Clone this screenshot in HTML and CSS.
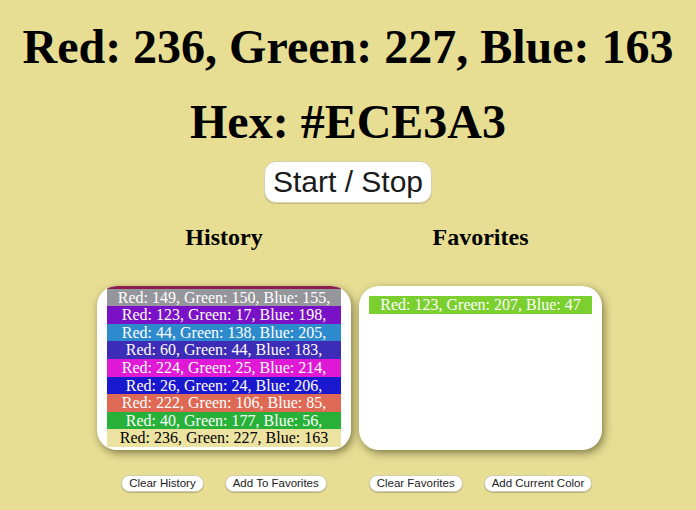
FILE: index.html
```html
<!DOCTYPE html>
<html lang="en">
<head>
<meta charset="utf-8">
<title>Color Cycler</title>
<link rel="stylesheet" href="styles.css">
</head>
<body>
<main class="app">
  <h1 class="title title-rgb">Red: 236, Green: 227, Blue: 163</h1>
  <h1 class="title title-hex">Hex: #ECE3A3</h1>
  <button class="toggle">Start / Stop</button>
  <div class="columns">
    <section class="col col-history">
      <h2 class="col-title">History</h2>
      <div class="box box-history">
        <div class="item" style="background: rgb(139,29,79)" aria-hidden="true"></div>
        <div class="item" style="background: rgb(149,150,155)">Red: 149, Green: 150, Blue: 155,</div>
        <div class="item" style="background: rgb(123,17,198)">Red: 123, Green: 17, Blue: 198,</div>
        <div class="item" style="background: rgb(44,138,205)">Red: 44, Green: 138, Blue: 205,</div>
        <div class="item" style="background: rgb(60,44,183)">Red: 60, Green: 44, Blue: 183,</div>
        <div class="item" style="background: rgb(224,25,214)">Red: 224, Green: 25, Blue: 214,</div>
        <div class="item" style="background: rgb(26,24,206)">Red: 26, Green: 24, Blue: 206,</div>
        <div class="item" style="background: rgb(222,106,85)">Red: 222, Green: 106, Blue: 85,</div>
        <div class="item" style="background: rgb(40,177,56)">Red: 40, Green: 177, Blue: 56,</div>
        <div class="item item-dark" style="background: rgb(236,227,163)">Red: 236, Green: 227, Blue: 163</div>
      </div>
      <div class="actions">
        <button class="small">Clear History</button>
        <button class="small">Add To Favorites</button>
      </div>
    </section>
    <section class="col col-favorites">
      <h2 class="col-title">Favorites</h2>
      <div class="box box-favorites">
        <div class="item" style="background: rgb(123,207,47)">Red: 123, Green: 207, Blue: 47</div>
      </div>
      <div class="actions">
        <button class="small">Clear Favorites</button>
        <button class="small">Add Current Color</button>
      </div>
    </section>
  </div>
</main>
</body>
</html>
```

FILE: styles.css
```css
html, body {
  margin: 0;
  padding: 0;
}

body {
  background: #e7de94;
  font-family: "Liberation Serif", "Times New Roman", serif;
  color: #000;
  width: 696px;
  height: 510px;
  overflow: hidden;
}

.app {
  display: flex;
  flex-direction: column;
  align-items: center;
}

.title {
  margin: 19px 0 0;
  font-size: 48px;
  line-height: 56px;
  font-weight: 700;
  text-align: center;
}

.toggle {
  margin-top: 11px;
  height: 42px;
  padding: 0 8px;
  border: 1px solid #d6d1b0;
  border-radius: 12px;
  background: #fff;
  font-family: "Liberation Sans", Arial, sans-serif;
  font-size: 30px;
  color: #1a1a1a;
  box-shadow: 0 1px 1px rgba(0, 0, 0, 0.15);
}

.columns {
  display: grid;
  grid-template-columns: 254px 243px;
  column-gap: 8px;
  padding-left: 3px;
}

.col {
  display: flex;
  flex-direction: column;
  align-items: center;
}

.col-title {
  margin: 20px 0 0;
  font-size: 24px;
  line-height: 28px;
  font-weight: 700;
}

.box {
  box-sizing: border-box;
  width: 100%;
  height: 164px;
  margin-top: 35px;
  background: #fff;
  border-radius: 20px;
  overflow: hidden;
  box-shadow: 2px 3px 9px rgba(60, 55, 20, 0.6);
  display: flex;
  flex-direction: column;
}

.box-history {
  padding: 0 10px 3px;
  justify-content: flex-end;
}

.box-favorites {
  padding: 10px 10px;
  justify-content: flex-start;
}

.item {
  flex: none;
  height: 17.6px;
  line-height: 17.6px;
  font-size: 16px;
  color: #fff;
  text-align: center;
  white-space: nowrap;
}

.item-dark {
  color: #000;
}

.actions {
  display: flex;
  justify-content: center;
  gap: 21px;
  margin-top: 25px;
}

.small {
  height: 17px;
  padding: 0 7px;
  border: 1px solid #cfcab0;
  border-radius: 9px;
  background: #fff;
  font-family: "Liberation Sans", Arial, sans-serif;
  font-size: 11.5px;
  line-height: 15px;
  color: #222;
  box-shadow: 0 1px 1px rgba(0, 0, 0, 0.2);
}
```
